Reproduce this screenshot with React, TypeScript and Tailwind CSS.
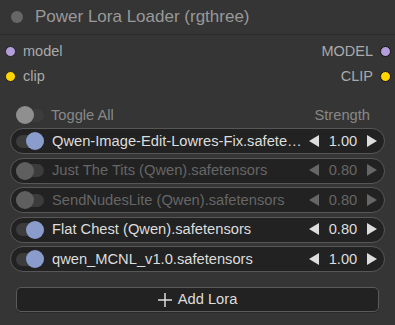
import React from 'react'

interface Lora {
  name: string
  strength: string
  on: boolean
}

const loras: Lora[] = [
  { name: 'Qwen-Image-Edit-Lowres-Fix.safetensors', strength: '1.00', on: true },
  { name: 'Just The Tits (Qwen).safetensors', strength: '0.80', on: false },
  { name: 'SendNudesLite (Qwen).safetensors', strength: '0.80', on: false },
  { name: 'Flat Chest (Qwen).safetensors', strength: '0.80', on: true },
  { name: 'qwen_MCNL_v1.0.safetensors', strength: '1.00', on: true },
]

function Arrow({ dir, color }: { dir: 'left' | 'right'; color: string }) {
  return (
    <svg width="10" height="12" viewBox="0 0 10 12" className="shrink-0">
      {dir === 'left' ? (
        <polygon points="10,0 10,12 0,6" fill={color} />
      ) : (
        <polygon points="0,0 0,12 10,6" fill={color} />
      )}
    </svg>
  )
}

function Toggle({ on, light }: { on: boolean; light?: boolean }) {
  return (
    <div className="relative w-[28px] h-[18px] shrink-0 flex items-center">
      <div className="w-full h-[13px] rounded-full bg-[#3c3c3c]" />
      <div
        className={
          on
            ? 'absolute right-0 top-0 w-[18px] h-[18px] rounded-full bg-[#8a9ccb]'
            : light
              ? 'absolute left-0 top-0 w-[18px] h-[18px] rounded-full bg-[#8f8f8f]'
              : 'absolute left-0 top-0 w-[18px] h-[18px] rounded-full bg-[#5f5f5f]'
        }
      />
    </div>
  )
}

export default function App() {
  return (
    <div
      className="w-[395px] h-[325px] bg-[#353535] overflow-hidden"
      style={{ fontFamily: '"Liberation Sans", Arial, sans-serif' }}
    >
      {/* Header */}
      <div className="h-[35px] flex items-center pl-[11px] border-b border-[#2b2b2b]">
        <div className="w-[12px] h-[12px] rounded-full bg-[#666]" />
        <span className="ml-[12px] text-[17px] text-[#999]">Power Lora Loader (rgthree)</span>
      </div>

      {/* Slots */}
      <div className="pt-[4px]">
        <div className="h-[25px] flex items-center justify-between pl-[5px] pr-[4px]">
          <div className="flex items-center gap-[7px]">
            <div className="w-[11px] h-[11px] rounded-full bg-[#b39ddb] border border-[#222]" />
            <span className="text-[14.5px] text-[#aaa]">model</span>
          </div>
          <div className="flex items-center gap-[7px]">
            <span className="text-[14.5px] text-[#aaa]">MODEL</span>
            <div className="w-[11px] h-[11px] rounded-full bg-[#b39ddb] border border-[#111]" />
          </div>
        </div>
        <div className="h-[25px] flex items-center justify-between pl-[5px] pr-[4px]">
          <div className="flex items-center gap-[7px]">
            <div className="w-[11px] h-[11px] rounded-full bg-[#ffd500] border border-[#222]" />
            <span className="text-[14.5px] text-[#aaa]">clip</span>
          </div>
          <div className="flex items-center gap-[7px]">
            <span className="text-[14.5px] text-[#aaa]">CLIP</span>
            <div className="w-[11px] h-[11px] rounded-full bg-[#ffd500] border border-[#111]" />
          </div>
        </div>
      </div>

      {/* Toggle all */}
      <div className="mt-[16px] h-[20px] flex items-center pl-[16px] pr-[25px]">
        <Toggle on={false} light />
        <span className="ml-[7px] text-[14.7px] text-[#888]">Toggle All</span>
        <span className="ml-auto text-[14.7px] text-[#888]">Strength</span>
      </div>

      {/* Loras */}
      <div className="mt-[3px] px-[10px] flex flex-col gap-[3.5px]">
        {loras.map((l, i) => {
          const c = l.on ? '#dddddd' : '#666666'
          return (
            <div
              key={i}
              className="h-[26px] rounded-full border border-[#575757] bg-[#222] flex items-center pl-[5px] pr-[7px]"
            >
              <Toggle on={l.on} />
              <span
                className={
                  l.on
                    ? 'ml-[8px] text-[14.7px] text-[#ddd] truncate flex-1 min-w-0'
                    : 'ml-[8px] text-[14.7px] text-[#666] truncate flex-1 min-w-0'
                }
              >
                {l.name}
              </span>
              <div className="flex items-center ml-[3px]">
                <Arrow dir="left" color={c} />
                <span
                  className={
                    l.on
                      ? 'w-[48px] text-center text-[14.7px] text-[#ddd]'
                      : 'w-[48px] text-center text-[14.7px] text-[#666]'
                  }
                >
                  {l.strength}
                </span>
                <Arrow dir="right" color={c} />
              </div>
            </div>
          )
        })}
      </div>

      {/* Add Lora */}
      <div className="mt-[15px] px-[16px]">
        <button className="w-full h-[25px] rounded-[5px] border border-[#5a5a5a] bg-[#222] flex items-center justify-center gap-[6px] text-[14.7px] text-[#ddd] shadow-[0_1px_0_#2a2a2a]">
          <svg width="14" height="14" viewBox="0 0 14 14">
            <path d="M7 0 V14 M0 7 H14" stroke="#ddd" strokeWidth="1.5" />
          </svg>
          Add Lora
        </button>
      </div>
    </div>
  )
}
